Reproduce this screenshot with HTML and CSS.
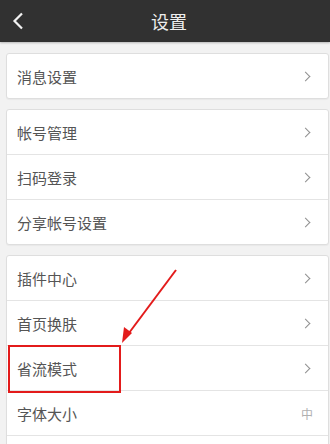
FILE: index.html
```html
<!DOCTYPE HTML>
<html>
    <head>
        <meta charset="UTF-8">
        <title>设置</title>
        <link rel="stylesheet" href="styles.css">
    </head>
    <body>
        <div id="page">
            <div class="top">
                <span class="back">
                    <svg width="12" height="18" viewBox="0 0 12 18"><path d="M10 1.5 L2.5 9 L10 16.5" fill="none" stroke="#f2f2f2" stroke-width="2.2"/></svg>
                </span>
                <h1>设置</h1>
            </div>
            <div class="groups">
                <ul class="group">
                    <li><span>消息设置</span><i class="more"></i></li>
                </ul>
                <ul class="group">
                    <li><span>帐号管理</span><i class="more"></i></li>
                    <li><span>扫码登录</span><i class="more"></i></li>
                    <li><span>分享帐号设置</span><i class="more"></i></li>
                </ul>
                <ul class="group">
                    <li><span>插件中心</span><i class="more"></i></li>
                    <li><span>首页换肤</span><i class="more"></i></li>
                    <li class="mark"><span>省流模式</span><i class="more"></i><b class="box"></b></li>
                    <li><span>字体大小</span><em>中</em></li>
                    <li></li>
                </ul>
            </div>
            <!-- 标注箭头 -->
            <svg class="arrow" width="330" height="444" viewBox="0 0 330 444">
                <line x1="176" y1="270" x2="126" y2="337" stroke="#e31b1b" stroke-width="2"/>
                <polygon points="122,343 124,327 132,333" fill="#e31b1b"/>
            </svg>
        </div>
    </body>
</html>
```
FILE: styles.css
```css
body{margin:0;font-family:"Noto Sans CJK SC","Noto Sans",sans-serif;}
ul,li,h1{margin:0;padding:0;list-style:none;}

#page{
    position: relative;
    width: 330px;
    height: 444px;
    overflow: hidden;
    background-color: #f2f2f2;
}
#page .top{
    display: flex;
    align-items: center;
    justify-content: center;
    position: relative;
    height: 42px;
    background-color: #313131;
    box-shadow: 0 1px 2px rgba(0,0,0,0.25);
}
#page .top .back{
    position: absolute;
    left: 12px;
    top: 11px;
    height: 18px;
}
#page .top h1{
    margin-left: 8px;
    color: #eeeeee;
    font-size: 18px;
    font-weight: normal;
    line-height: 42px;
}
#page .groups{
    display: flex;
    flex-direction: column;
    gap: 10px;
    padding: 11px 1px 0 6px;
}
#page .group{
    background-color: #ffffff;
    border: 1px solid #dedede;
    border-radius: 3px;
    box-shadow: 0 1px 1px rgba(0,0,0,0.04);
}
#page .group li{
    display: flex;
    align-items: center;
    justify-content: space-between;
    position: relative;
    height: 44px;
    padding: 0 10px 0 10px;
    border-top: 1px solid #e4e4e4;
    color: #555555;
    font-size: 15px;
}
#page .group li:first-child{
    border-top: none;
}
#page .group .more{
    width: 6px;
    height: 6px;
    margin-right: 9px;
    border-top: 1.3px solid #8f8f8f;
    border-right: 1.3px solid #8f8f8f;
    transform: rotate(45deg);
}
#page .group em{
    margin-right: 5px;
    color: #b0b0b0;
    font-size: 12px;
    font-style: normal;
}
#page .group .box{
    position: absolute;
    z-index: 2;
    left: 1px;
    top: -1px;
    width: 109px;
    height: 44px;
    border: 2px solid #e31b1b;
}
#page .arrow{
    position: absolute;
    z-index: 3;
    left: 0;
    top: 0;
}
```
